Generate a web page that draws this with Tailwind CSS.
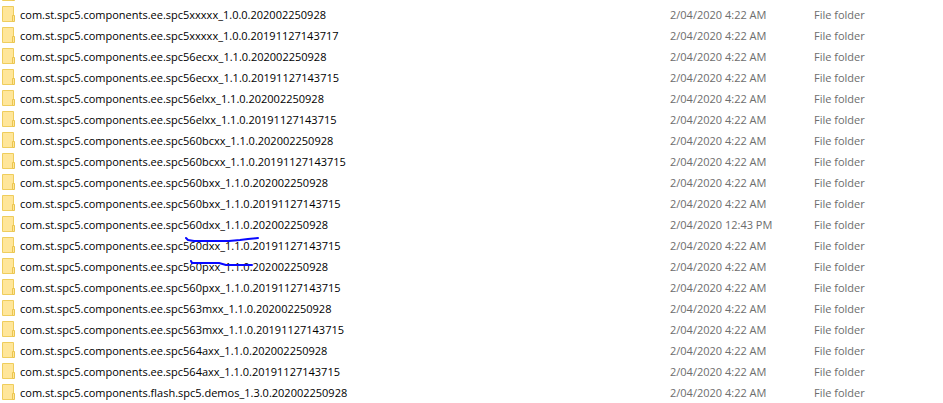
<!DOCTYPE html>
<html lang="en">
<head>
    <meta charset="UTF-8">
    <meta name="viewport" content="width=device-width, initial-scale=1.0">
    <title>plugins</title>
    <script src="https://cdn.jsdelivr.net/npm/@tailwindcss/browser@4"></script>
</head>
<body class="bg-white overflow-hidden font-['Open_Sans','Noto_Sans',sans-serif] text-[11px] leading-[21px] text-black">
    <svg class="hidden">
        <symbol id="folder" viewBox="0 0 13 16">
            <path d="M0.5 0.5H11.5V15.5H0.5Z" fill="#ffe69a" stroke="#efcd5c"/>
            <path d="M10.5 15.5V9.5H12.5V15.5Z" fill="#ffe69a" stroke="#eac54f"/>
        </symbol>
    </svg>

    <main class="relative flow-root">
        <table class="w-full table-fixed border-collapse -mt-[17px]">
            <colgroup>
                <col class="w-[20px]">
                <col>
                <col class="w-[144px]">
                <col class="w-[129px]">
            </colgroup>
            <tbody id="files"></tbody>
        </table>

        <!-- pen marks under the two 560dxx entries -->
        <svg class="absolute left-[184px] top-[234px] w-[78px] h-[34px]" viewBox="0 0 78 34" fill="none" stroke="#0808ff" stroke-width="2" stroke-linecap="round" stroke-linejoin="round">
            <path d="M2 4L4 6L10 7H45L56 6L64 5L74 4"/>
            <path d="M7 27L8 29H35L42 31H68"/>
        </svg>
    </main>

    <template id="row">
        <tr class="h-[21px]">
            <td class="p-0 pt-[2px] align-top"><svg class="ml-[2px] w-[13px] h-[16px]"><use href="#folder"/></svg></td>
            <td class="p-0 whitespace-nowrap"></td>
            <td class="p-0 whitespace-nowrap text-[#6d6d6d]"></td>
            <td class="p-0 whitespace-nowrap text-[#6d6d6d]"></td>
        </tr>
    </template>

    <script>
        // the first row is scrolled out, only the bottom of its icon shows
        const files = [
            "",
            "ee.spc5xxxxx_1.0.0.202002250928",
            "ee.spc5xxxxx_1.0.0.20191127143717",
            "ee.spc56ecxx_1.1.0.202002250928",
            "ee.spc56ecxx_1.1.0.20191127143715",
            "ee.spc56elxx_1.1.0.202002250928",
            "ee.spc56elxx_1.1.0.20191127143715",
            "ee.spc560bcxx_1.1.0.202002250928",
            "ee.spc560bcxx_1.1.0.20191127143715",
            "ee.spc560bxx_1.1.0.202002250928",
            "ee.spc560bxx_1.1.0.20191127143715",
            "ee.spc560dxx_1.1.0.202002250928",
            "ee.spc560dxx_1.1.0.20191127143715",
            "ee.spc560pxx_1.1.0.202002250928",
            "ee.spc560pxx_1.1.0.20191127143715",
            "ee.spc563mxx_1.1.0.202002250928",
            "ee.spc563mxx_1.1.0.20191127143715",
            "ee.spc564axx_1.1.0.202002250928",
            "ee.spc564axx_1.1.0.20191127143715",
            "flash.spc5.demos_1.3.0.202002250928",
        ];
        const body = document.getElementById("files");
        const template = document.getElementById("row");

        files.forEach((name, i) => {
            const row = template.content.cloneNode(true);
            const cells = row.querySelectorAll("td");
            if (name) {
                cells[1].textContent = "com.st.spc5.components." + name;
                cells[2].textContent = i === 11 ? "2/04/2020 12:43 PM" : "2/04/2020 4:22 AM";
                cells[3].textContent = "File folder";
            }
            body.appendChild(row);
        });
    </script>
</body>
</html>
